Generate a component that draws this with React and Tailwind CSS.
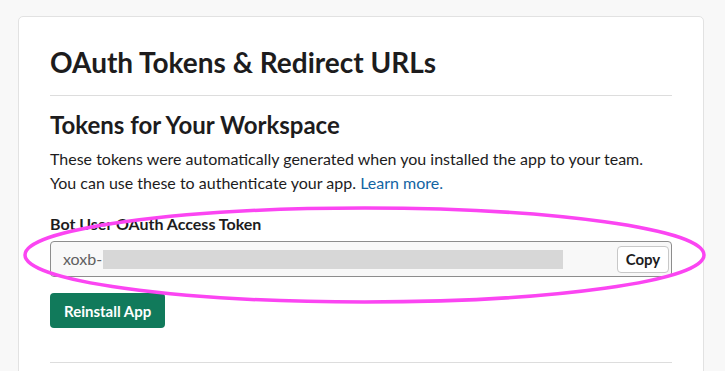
import React from 'react'

const Annotation = () => (
  <svg
    className='absolute left-0 top-0 pointer-events-none'
    width='725'
    height='371'
    viewBox='0 0 725 371'
  >
    <ellipse
      cx='364.5'
      cy='255'
      rx='339.5'
      ry='47'
      fill='none'
      stroke='#fb45f2'
      strokeWidth='3.5'
    />
  </svg>
)

const App = () => {
  return (
    <div
      className='relative h-[371px] overflow-hidden bg-[#f8f8f8] pt-4 pl-[18px]'
      style={{ fontFamily: 'Lato, "Noto Sans", sans-serif' }}
    >
      <div className='w-[686px] bg-white border border-[#e2e2e2] rounded-[5px] px-[31px] pt-[29px] pb-10'>
        <h1 className='text-[28px] leading-[1.2] font-bold text-[#1d1c1d]'>
          OAuth Tokens &amp; Redirect URLs
        </h1>
        <div className='h-px bg-[#dddddd] mt-[15px]' />

        <h2 className='text-[24px] leading-[1.2] font-bold text-[#1d1c1d] mt-[15px]'>
          Tokens for Your Workspace
        </h2>
        <p className='text-[16px] leading-6 text-[#1d1c1d] mt-2'>
          These tokens were automatically generated when you installed the app to your team.
          <br />
          You can use these to authenticate your app.{' '}
          <a href='#' className='text-[#1264a3]'>Learn more.</a>
        </p>

        <div className='text-[16px] leading-5 font-bold text-[#1d1c1d] mt-[19px]'>
          Bot User OAuth Access Token
        </div>
        <div className='mt-[7px] h-9 flex items-center bg-[#f8f8f8] border border-[#8d8d8d] rounded-[4px] pl-3 pr-[2px]'>
          <span className='text-[16px] text-[#616061]'>xoxb-</span>
          <span className='ml-px h-[19px] w-[460px] bg-[#d7d7d7]' />
          <button className='ml-auto h-[27px] w-[52px] bg-white border border-[#c8c8c8] rounded-[4px] text-[15px] font-bold text-[#1d1c1d]'>
            Copy
          </button>
        </div>

        <button className='mt-4 h-[35px] px-[14px] rounded-[4px] bg-[#117a5b] text-white text-[15px] font-bold'>
          Reinstall App
        </button>

        <div className='h-px bg-[#dddddd] mt-[34px]' />
      </div>
      <Annotation />
    </div>
  )
}

export default App
